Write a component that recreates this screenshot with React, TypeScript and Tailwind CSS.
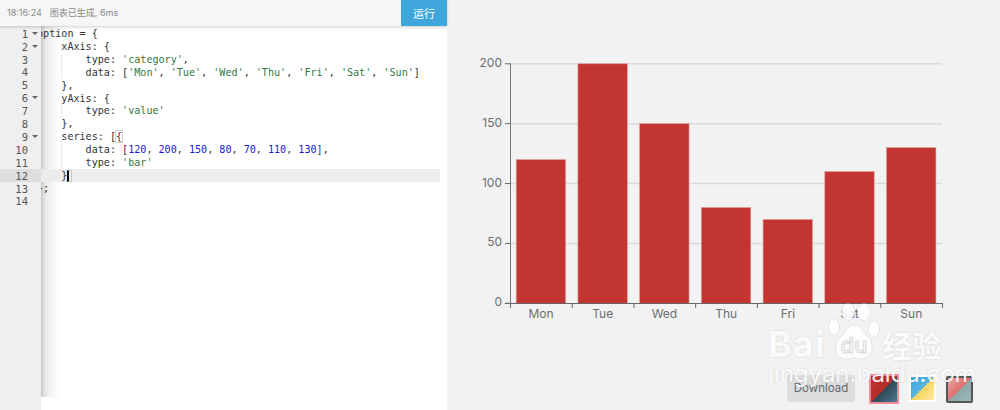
const S = ({ c }: { c: string }) => <span className="text-[#2f7a3f]">{c}</span>;
const N = ({ c }: { c: string }) => <span className="text-[#1a1ad0]">{c}</span>;

const lines: { n: number; fold?: boolean; guide?: boolean; body: React.ReactNode; active?: boolean }[] = [
  { n: 1, fold: true, body: "option = {" },
  { n: 2, fold: true, body: "    xAxis: {" },
  { n: 3, guide: true, body: <>{"        type: "}<S c="'category'" />,</> },
  { n: 4, guide: true, body: <>{"        data: ["}<S c="'Mon'" />, <S c="'Tue'" />, <S c="'Wed'" />, <S c="'Thu'" />, <S c="'Fri'" />, <S c="'Sat'" />, <S c="'Sun'" />]</> },
  { n: 5, body: "    }," },
  { n: 6, fold: true, body: "    yAxis: {" },
  { n: 7, guide: true, body: <>{"        type: "}<S c="'value'" /></> },
  { n: 8, body: "    }," },
  { n: 9, fold: true, body: <>{"    series: ["}<span className="outline outline-1 outline-[#d0d0d0]">{"{"}</span></> },
  { n: 10, guide: true, body: <>{"        data: ["}<N c="120" />, <N c="200" />, <N c="150" />, <N c="80" />, <N c="70" />, <N c="110" />, <N c="130" />],</> },
  { n: 11, guide: true, body: <>{"        type: "}<S c="'bar'" /></> },
  { n: 12, active: true, body: <>{"    }"}<span className="inline-block align-top mt-[1px] w-[5px] h-[12px] border-l-2 border-l-black border-y border-r border-y-[#c8c8c8] border-r-[#c8c8c8]" /></> },
  { n: 13, body: "};" },
  { n: 14, body: "" },
];

const data = [120, 200, 150, 80, 70, 110, 130];
const days = ["Mon", "Tue", "Wed", "Thu", "Fri", "Sat", "Sun"];
const font = { fontFamily: "Inter, 'Open Sans', sans-serif" };
const y = (v: number) => 303.3 - v * 1.1975;

function Chart() {
  return (
    <svg width="553" height="340" viewBox="447 0 553 340" className="block shrink-0" style={font}>
      {[50, 100, 150, 200].map((v) => (
        <line key={v} x1="510" x2="942" y1={y(v)} y2={y(v)} stroke="#dadada" strokeWidth="1.4" />
      ))}
      {data.map((v, i) => (
        <rect key={i} x={516.2 + i * 61.72} y={y(v)} width="49.4" height={303.3 - y(v)} fill="#c23531" stroke="#e09a97" strokeWidth="0.6" />
      ))}
      <line x1="510.5" x2="510.5" y1="63.5" y2="303.5" stroke="#777" />
      <line x1="505" x2="943" y1="303.5" y2="303.5" stroke="#666" />
      {[0, 50, 100, 150, 200].map((v) => (
        <g key={v}>
          <line x1="505" x2="510" y1={y(v)} y2={y(v)} stroke="#666" />
          <text x="502" y={y(v) + 3} textAnchor="end" fontSize="12" fill="#6e6e6e">{v}</text>
        </g>
      ))}
      {Array.from({ length: 8 }).map((_, i) => (
        <line key={i} x1={510.5 + i * 61.72} x2={510.5 + i * 61.72} y1="303" y2="308" stroke="#666" />
      ))}
      {days.map((d, i) => (
        <text key={d} x={541 + i * 61.72} y="318" textAnchor="middle" fontSize="12" fill="#6e6e6e">{d}</text>
      ))}
    </svg>
  );
}

export default function App() {
  return (
    <div className="relative w-[1000px] h-[410px] flex overflow-hidden bg-[#f2f2f2]">
      <div className="w-[447px] h-full flex flex-col bg-white">
        <div className="relative z-10 h-[26px] shrink-0 flex items-center justify-between bg-[#f6f6f6] shadow-[0_1px_3px_rgba(0,0,0,0.2)]" style={font}>
          <div className="pl-[7px] flex gap-[8px] text-[9px] text-[#8a8a8a]">
            <span>18:16:24</span>
            <span style={{ fontFamily: "Inter, 'Noto Sans CJK SC', sans-serif" }}>图表已生成, 6ms</span>
          </div>
          <div className="w-[46px] h-[26px] flex items-center justify-center bg-[#3fa7dc] text-white text-[11px]" style={{ fontFamily: "'Noto Sans CJK SC', sans-serif" }}>运行</div>
        </div>
        <div className="flex-1 flex min-h-0">
          <div className="w-[41px] h-full shrink-0 bg-[#efefef] pt-[1px]">
            {lines.map((l) => (
              <div key={l.n} className={`h-[12.92px] flex items-center text-[10.5px] leading-none text-[#555] ${l.active ? "bg-[#dedede]" : ""}`} style={{ fontFamily: "'DejaVu Sans Mono', monospace" }}>
                <span className="w-[28px] text-right pt-[1px]">{l.n}</span>
                {l.fold && <span className="ml-[4px] w-0 h-0 border-x-[3px] border-x-transparent border-t-[3px] border-t-[#666]" />}
              </div>
            ))}
          </div>
          <div className="flex-1 flex flex-col min-w-0">
            <div className="relative h-[371px] shrink-0 overflow-hidden pt-[1px] pr-[7px] bg-[linear-gradient(to_right,#c6c6c6,#e6e6e6_20%,#f6f6f6_55%,#ffffff_100%)] bg-[length:20px_100%] bg-no-repeat">
              {lines.map((l) => (
                <div key={l.n} className={`relative h-[12.92px] leading-[14.9px] whitespace-pre text-[10.1px] text-[#333] ${l.active ? "bg-[#ececec]" : ""}`} style={{ fontFamily: "'DejaVu Sans Mono', monospace" }}>
                  {l.guide && <span className="absolute left-[20px] top-0 bottom-0 border-l border-[#e8e8e8]" />}
                  <span className="relative block -ml-[4px]">{l.body}</span>
                </div>
              ))}
            </div>
          </div>
        </div>
      </div>

      <div className="w-[553px] h-full flex flex-col">
        <Chart />
        <div className="flex items-start pt-[34px] pl-[340px]">
          <div className="w-[68px] h-[27px] mt-[1px] rounded-[2px] bg-[#dddddd] flex items-center justify-center text-[11.5px] text-[#666]" style={font}>Download</div>
          <div className="ml-[14px] w-[30px] h-[30px] border-2 border-[#f08a9a] rounded-[1px] bg-[linear-gradient(135deg,#c23531,#b02e2a_50%,#2f4554_50%,#4d7a90)]" />
          <div className="ml-[10px] mt-[1px] w-[27px] h-[27px] border-2 border-white bg-[linear-gradient(135deg,#3fa7dc,#58b4e4_50%,#fbd65c_50%,#fde8a8)]" />
          <div className="ml-[10px] mt-[2px] w-[27px] h-[27px] border-2 border-[#555] rounded-[2px] bg-[linear-gradient(135deg,#e8a8a6,#e07070_50%,#8aa8a8_50%,#9cbaba)]" />
        </div>
      </div>

      <div className="absolute left-[768px] top-[303px] w-[180px] h-[90px] text-white/90 pointer-events-none [text-shadow:0_0_2px_rgba(0,0,0,0.16)]" style={font}>
        <span className="absolute left-0 top-[21px] text-[36px] leading-[40px] font-bold tracking-[1px]">Bai</span>
        <svg width="52" height="57" viewBox="0 0 52 57" className="absolute left-[60px] top-0">
          <g fill="white" fillOpacity="0.85" stroke="#000" strokeOpacity="0.1" strokeWidth="0.8">
            <ellipse cx="6" cy="24" rx="5.5" ry="8" />
            <ellipse cx="20" cy="9" rx="6.5" ry="8.5" />
            <ellipse cx="36" cy="9" rx="6.5" ry="8.5" />
            <ellipse cx="46" cy="26" rx="5.5" ry="8" />
            <path d="M26 22c7 0 9 7 15 13 6 8 3 21-9 21-3 0-4-1-6-1s-3 1-8 1C7 56 5 44 11 36c6-6 8-14 15-14z" />
          </g>
          <text x="26" y="50" textAnchor="middle" fontSize="22" fontWeight="500" fill="#f4f4f4" stroke="#000" strokeOpacity="0.2" strokeWidth="0.5">du</text>
        </svg>
        <span className="absolute left-[114px] top-[22px] text-[30px] leading-[38px] font-bold" style={{ fontFamily: "'Noto Sans CJK SC', sans-serif" }}>经验</span>
        <span className="absolute left-0 top-[58px] text-[24px] leading-[26px] whitespace-nowrap">jingyan.baidu.com</span>
      </div>
    </div>
  );
}
